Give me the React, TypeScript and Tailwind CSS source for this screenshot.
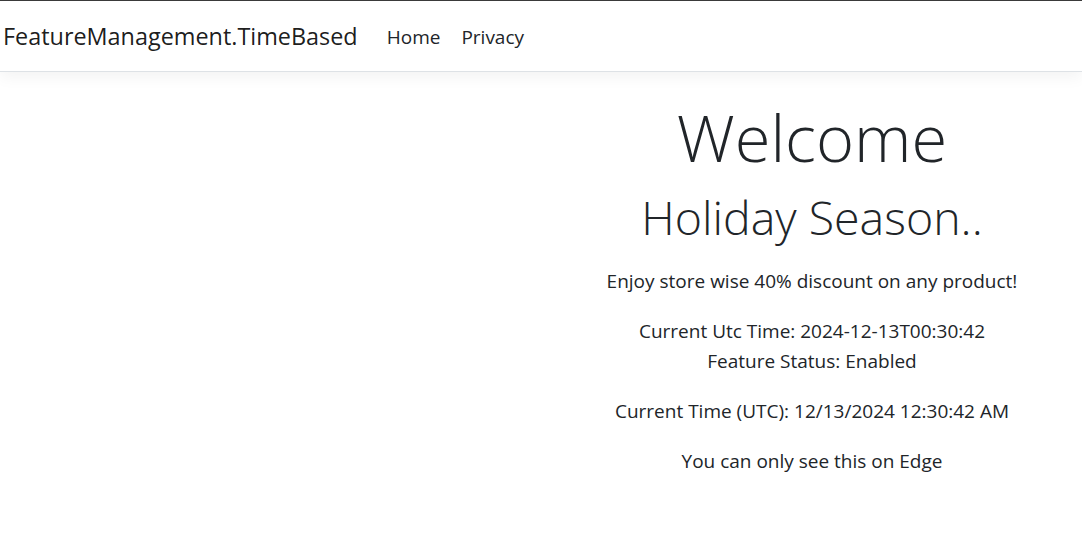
export default function App() {
  return (
    <div className="min-h-[537px] bg-white text-[#212529] font-['Open_Sans','Noto_Sans',sans-serif]">
      <header className="border-t border-[#3a3a3a] border-b border-b-[#dee2e6] bg-white shadow-[0_5px_15px_rgba(0,0,0,0.05)]">
        <nav className="flex h-[70px] items-center pl-[3px] pt-[2px]">
          <a className="mr-[29px] text-[23.4px] text-black/90">FeatureManagement.TimeBased</a>
          <ul className="flex gap-[21px] text-[19px] text-[#212529]">
            <li>Home</li>
            <li>Privacy</li>
          </ul>
        </nav>
      </header>

      <main className="grid grid-cols-[542px_1fr] pt-[23px]">
        <div />
        <div className="text-center text-[19px] leading-[30px]">
          <h1 className="text-[65px] font-light leading-[84px]">Welcome</h1>
          <h2 className="mt-[10px] mb-[21px] text-[46.5px] font-light leading-[56px]">Holiday Season..</h2>
          <p className="mb-[20px]">Enjoy store wise 40% discount on any product!</p>
          <p>Current Utc Time: 2024-12-13T00:30:42</p>
          <p className="mb-[20px]">Feature Status: Enabled</p>
          <p className="mb-[20px]">Current Time (UTC): 12/13/2024 12:30:42 AM</p>
          <p>You can only see this on Edge</p>
        </div>
      </main>
    </div>
  );
}
